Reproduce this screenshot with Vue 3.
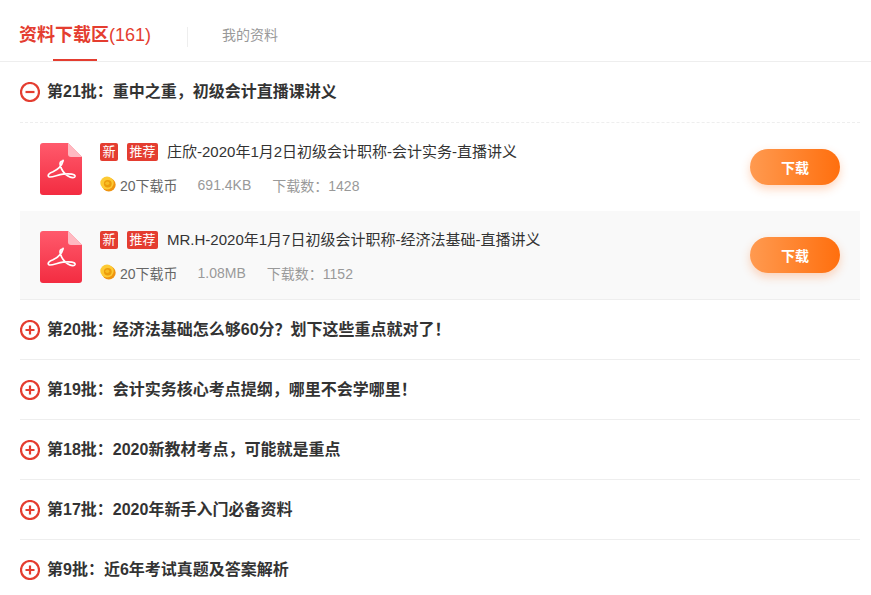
<script setup>
const items = [
  { title: '庄欣-2020年1月2日初级会计职称-会计实务-直播讲义', size: '691.4KB', count: 1428 },
  { title: 'MR.H-2020年1月7日初级会计职称-经济法基础-直播讲义', size: '1.08MB', count: 1152 }
]
const groups = [
  '第20批：经济法基础怎么够60分？划下这些重点就对了！',
  '第19批：会计实务核心考点提纲，哪里不会学哪里！',
  '第18批：2020新教材考点，可能就是重点',
  '第17批：2020年新手入门必备资料',
  '第9批：近6年考试真题及答案解析'
]
</script>

<template>
  <div class="page">
    <header class="tabs">
      <div class="tab-active">资料下载区<span class="num">(161)</span><i class="underline"></i></div>
      <i class="sep"></i>
      <div class="tab">我的资料</div>
    </header>
    <section class="list">
      <div class="group-head open">
        <svg class="toggle" width="20" height="20" viewBox="0 0 20 20"><circle cx="10" cy="10" r="9" fill="none" stroke="#e43d30" stroke-width="2.2"/><path d="M5.500 10h9" stroke="#e43d30" stroke-width="2.2"/></svg>
        <h3>第21批：重中之重，初级会计直播课讲义</h3>
      </div>
      <div class="items">
        <div v-for="(it, i) in items" :key="i" class="item">
          <svg class="pdf" width="42" height="52" viewBox="0 0 42 52">
            <defs>
              <linearGradient :id="'g' + i" x1="0" y1="0" x2="0" y2="1"><stop offset="0" stop-color="#ff5a6c"/><stop offset="1" stop-color="#f32c41"/></linearGradient>
            </defs>
            <path :fill="`url(#g${i})`" d="M3 0H28L42 14V49a3 3 0 0 1-3 3H3a3 3 0 0 1-3-3V3a3 3 0 0 1 3-3z"/>
            <path fill="#ffb9c1" d="M28 0L42 14H31a3 3 0 0 1-3-3z"/>
            <path fill="none" stroke="#fff" stroke-width="1.700" stroke-linejoin="round" d="M22.500 18c-2 0-2.800 1.800-2.300 4 .9 4 3.800 8.500 7.800 11 3 1.800 6.500 2.300 7 .5.500-2.300-5-3.300-12-2.300-6 1-12 3.600-14 2.600-2-1.300 0-3.600 4-5.100 5-2.300 9-6.800 10-10.700.4-1.500 0-.0-.5.0z"/>
          </svg>
          <div class="info">
            <div class="line1">
              <span class="tag">新</span><span class="tag">推荐</span><span class="name">{{ it.title }}</span>
            </div>
            <div class="line2">
              <svg class="coin" width="16" height="16" viewBox="0 0 16 16">
                <ellipse cx="8.800" cy="8.800" rx="6.900" ry="6.800" fill="#ef9410"/>
                <ellipse cx="7" cy="7" rx="6.700" ry="6.500" fill="#fdca34"/>
                <ellipse cx="7.800" cy="7.800" rx="3.900" ry="3.700" fill="#ec9c0c"/>
                <ellipse cx="7.300" cy="7.300" rx="2" ry="1.800" fill="#f7bd22"/>
              </svg>
              <span class="price">20下载币</span>
              <span class="meta">{{ it.size }}</span>
              <span class="meta">下载数：{{ it.count }}</span>
            </div>
          </div>
          <button class="btn">下载</button>
        </div>
      </div>
      <div v-for="g in groups" :key="g" class="group-head">
        <svg class="toggle" width="20" height="20" viewBox="0 0 20 20"><circle cx="10" cy="10" r="9" fill="none" stroke="#e43d30" stroke-width="2.2"/><path d="M5.500 10h9M10 5.500v9" stroke="#e43d30" stroke-width="2.2"/></svg>
        <h3>{{ g }}</h3>
      </div>
    </section>
  </div>
</template>

<style>
html, body { margin: 0; background: #fff; overflow: hidden; }
</style>
<style scoped>
.page {
  width: 871px;
  height: 595px;
  overflow: hidden;
  font-family: "Liberation Sans", "Noto Sans CJK SC", sans-serif;
}
.tabs {
  display: flex;
  align-items: center;
  border-bottom: 1px solid #eee;
  padding-left: 19px;
  padding-top: 13px;
  height: 48px;
}
.tab-active {
  position: relative;
  font-size: 18px;
  font-weight: bold;
  color: #e43d30;
  line-height: 24px;
  margin-top: -4px;
}
.num { font-weight: normal; }
.underline {
  position: absolute;
  left: 34px;
  top: 36px;
  width: 44px;
  height: 2px;
  background: #e43d30;
}
.sep {
  width: 1px;
  height: 20px;
  background: #eee;
  margin: 0 34px 0 36px;
}
.tab { font-size: 14px; color: #999; line-height: 20px; margin-top: -4px; }
.list { padding: 0 11px 0 20px; }
.group-head {
  display: flex;
  align-items: center;
  height: 59px;
  border-bottom: 1px solid #eee;
}
.group-head.open {
  height: 60px;
  border-bottom: 1px dashed #eee;
}
.toggle { flex: none; margin-right: 7px; }
h3 {
  margin: 0;
  font-size: 16px;
  font-weight: bold;
  color: #333;
  line-height: 20px;
}
.items { border-bottom: 1px solid #eee; }
.item {
  height: 88px;
  display: flex;
  align-items: center;
  padding: 0 20px 0 20px;
}
.item:nth-child(2) { background: #f9f9f9; }
.pdf { flex: none; margin-right: 18px; margin-top: 4px; }
.info { flex: 1; margin-top: 2px; }
.line1 { display: flex; align-items: center; height: 20px; margin-top: 1px; margin-bottom: 13px; }
.tag {
  height: 18px;
  line-height: 18px;
  padding: 0 2.5px;
  margin-right: 9px;
  background: #e43d30;
  color: #fff;
  font-size: 13px;
  border-radius: 2px;
}
.name { font-size: 15px; color: #333; line-height: 20px; }
.line2 { display: flex; align-items: center; height: 20px; font-size: 14px; color: #999; }
.coin { flex: none; margin-right: 4px; margin-top: -2px; }
.price { color: #666; margin-right: 20px; }
.meta { margin-right: 21px; }
.btn {
  width: 90px;
  height: 36px;
  border: 0;
  border-radius: 18px;
  background: linear-gradient(90deg, #ff9a50, #ff6f0e);
  box-shadow: 0 4px 10px rgba(255, 120, 40, .3);
  color: #fff;
  font: bold 14px "Liberation Sans", "Noto Sans CJK SC", sans-serif;
  padding: 0;
}
</style>
